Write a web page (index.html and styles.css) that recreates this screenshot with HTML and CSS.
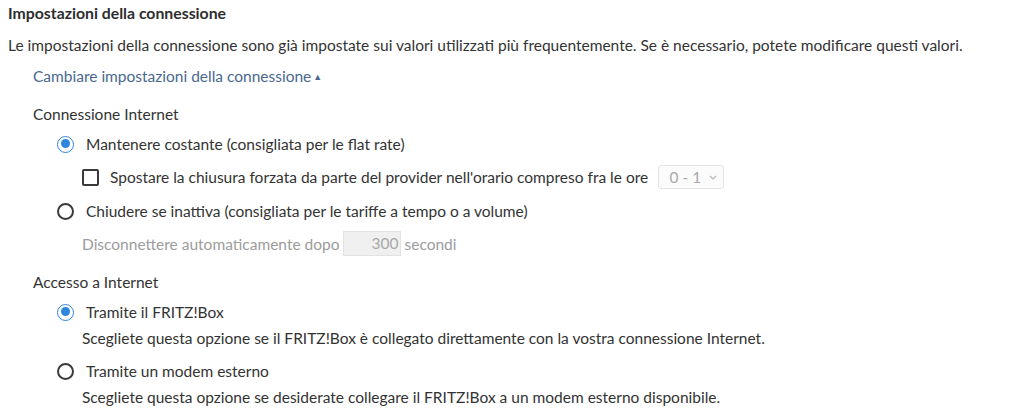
FILE: index.html
```html
<!DOCTYPE html>
<html lang="it">
<head>
<meta charset="utf-8">
<link rel="stylesheet" href="styles.css">
</head>
<body>
<h1 class="title">Impostazioni della connessione</h1>
<p class="intro">Le impostazioni della connessione sono già impostate sui valori utilizzati più frequentemente. Se è necessario, potete modificare questi valori.</p>
<a class="toggle" href="#">Cambiare impostazioni della connessione<span class="caret">▲</span></a>

<div class="group">
  <div class="group-head">Connessione Internet</div>
  <label class="opt r1"><span class="radio checked"></span><span>Mantenere costante (consigliata per le flat rate)</span></label>
  <div class="sub cbrow">
    <label class="cb"><span class="check"></span><span>Spostare la chiusura forzata da parte del provider nell'orario compreso fra le ore</span></label>
    <span class="select"><span class="sel-val">0 - 1</span><svg class="chev" width="8" height="5" viewBox="0 0 8 5"><path d="M1 1l3 3 3-3" fill="none" stroke="#b5b5b5" stroke-width="1.1"/></svg></span>
  </div>
  <label class="opt r2"><span class="radio"></span><span>Chiudere se inattiva (consigliata per le tariffe a tempo o a volume)</span></label>
  <div class="sub disc"><span>Disconnettere automaticamente dopo</span><span class="num">300</span><span>secondi</span></div>
</div>

<div class="group g2">
  <div class="group-head">Accesso a Internet</div>
  <label class="opt r3"><span class="radio checked"></span><span>Tramite il FRITZ!Box</span></label>
  <div class="desc">Scegliete questa opzione se il FRITZ!Box è collegato direttamente con la vostra connessione Internet.</div>
  <label class="opt r4"><span class="radio"></span><span>Tramite un modem esterno</span></label>
  <div class="desc">Scegliete questa opzione se desiderate collegare il FRITZ!Box a un modem esterno disponibile.</div>
</div>
</body>
</html>
```

FILE: styles.css
```css
* { box-sizing: border-box; }
html, body { background: #fff; }
body {
  margin: 0;
  padding: 3px 8px 0 8px;
  font-family: "Lato", "Open Sans", sans-serif;
  font-size: 15.5px;
  line-height: 20px;
  color: #333;
}
.title {
  margin: 0;
  font-size: 15.8px;
  line-height: 20px;
  font-weight: 700;
  color: #2e2e2e;
}
.intro { margin: 12px 0 0 0; }
.toggle {
  display: block;
  margin: 11px 0 0 25px;
  color: #4a6891;
  text-decoration: none;
}
.caret { font-size: 9px; margin-left: 2px; vertical-align: 2px; }
.group { margin: 17px 0 0 25px; display: flex; flex-direction: column; }
.g2 { margin-top: 16px; }
.group-head { height: 20px; }
.opt {
  display: flex;
  align-items: center;
  gap: 12px;
  margin: 10px 0 0 24px;
  height: 20px;
}
.r2 { margin-top: 12px; }
.r4 { margin-top: 13px; }
.radio {
  width: 17px; height: 17px;
  border-radius: 50%;
  border: 2px solid #3a3a3a;
  flex: none;
  position: relative;
}
.radio.checked { border: 1.5px solid #2f86e0; }
.radio.checked::after {
  content: "";
  position: absolute;
  left: 2.5px; top: 2.5px;
  width: 9px; height: 9px;
  border-radius: 50%;
  background: #2f86e0;
}
.sub { margin: 11px 0 0 49px; display: flex; align-items: center; }
.cbrow { height: 24px; }
.cb { display: flex; align-items: center; gap: 11px; }
.check {
  width: 17px; height: 17px;
  border: 2px solid #3a3a3a;
  border-radius: 2px;
  flex: none;
}
.select {
  margin-left: 10px;
  width: 66px; height: 24px;
  border: 1px solid #e4e4e4;
  border-radius: 3px;
  background: #fbfbfb;
  display: flex; align-items: center; justify-content: flex-end;
  padding-right: 6px;
  color: #a8a8a8;
  gap: 8px;
}
.disc { margin-top: 10px; height: 25px; color: #9c9c9c; }
.num {
  margin: 0 4px 0 3px;
  width: 58px; height: 25px;
  background: #f0f0f0;
  border: 1px solid #e2e2e2;
  text-align: right;
  padding-right: 1px;
  line-height: 23px;
  color: #a8a8a8;
}
.desc { margin: 6px 0 0 49px; height: 20px; }
```
